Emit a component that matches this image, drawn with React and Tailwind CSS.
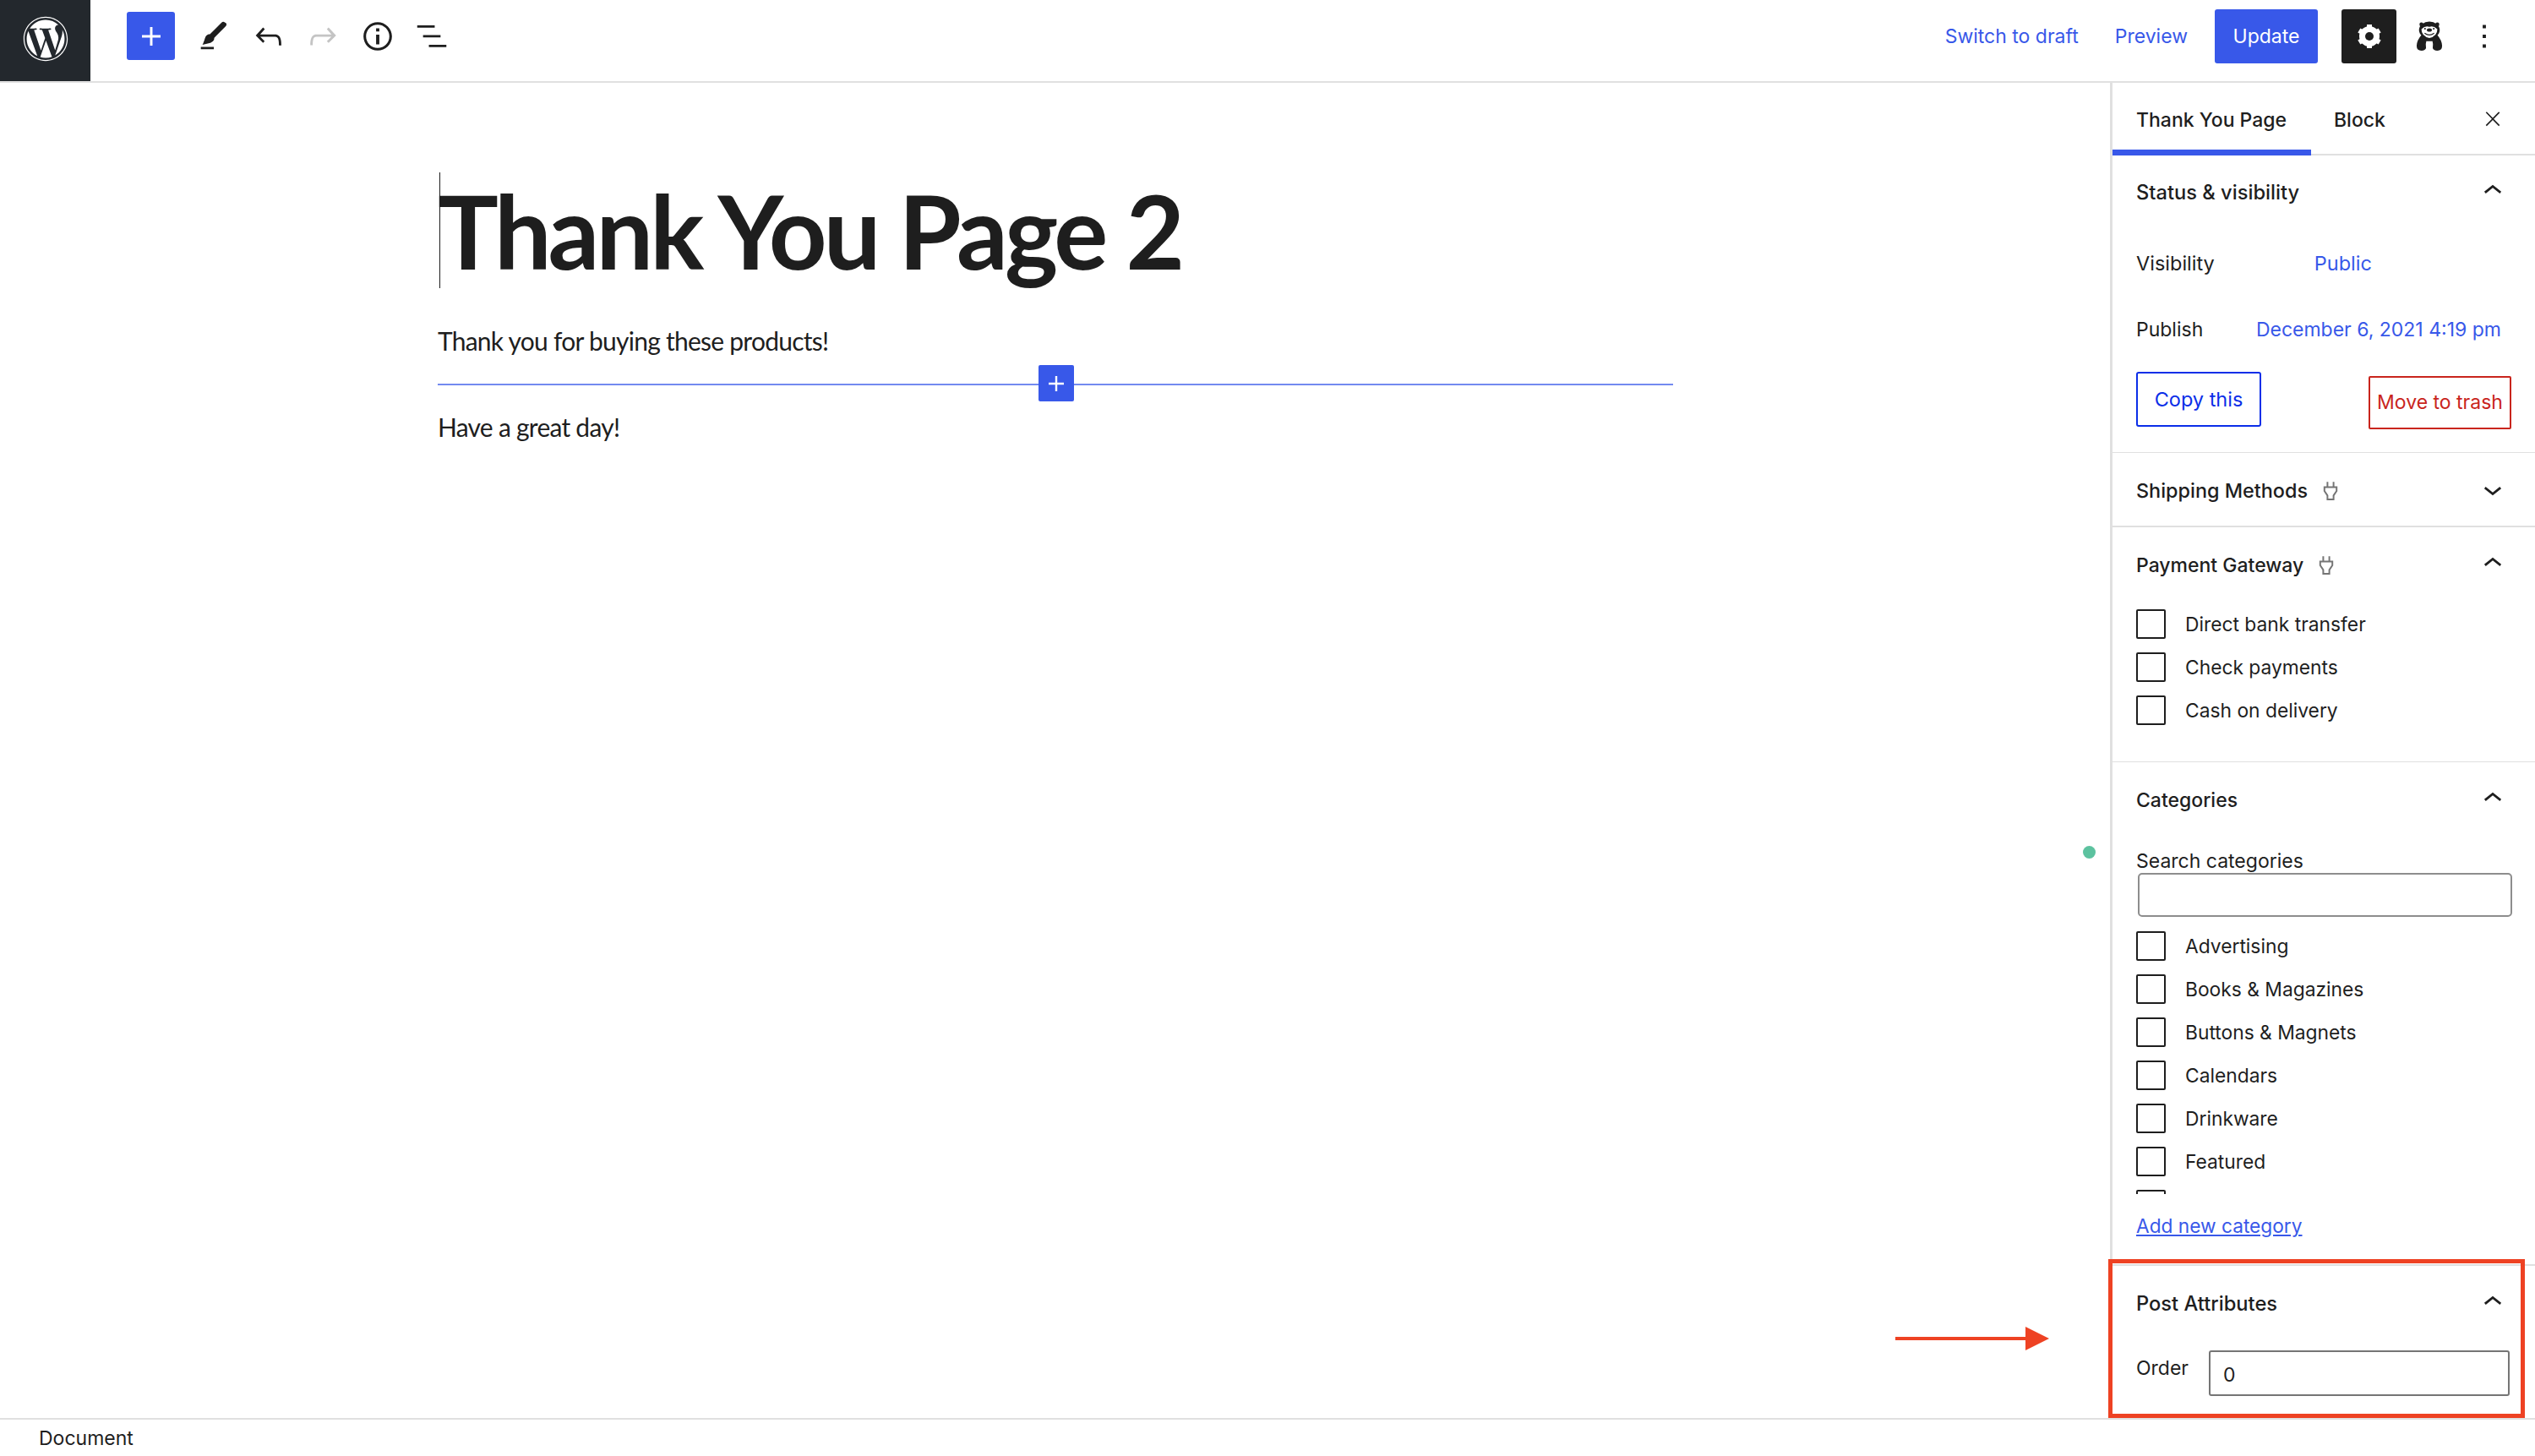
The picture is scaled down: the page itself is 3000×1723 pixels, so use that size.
import { FaWordpress } from 'react-icons/fa';

const ICONS = {
    plus: 'M18 11.2h-5.2V6h-1.6v5.2H6v1.6h5.2V18h1.6v-5.2H18z',
    pen: 'M4 20h8v-1.5H4V20zM18.9 3.5c-.6-.6-1.5-.6-2.1 0l-7.2 7.2c-.4-.1-.7 0-1.1.1-.5.2-1.5.7-1.9 2.2-.3 1-.6 1.9-.9 2.6-.2.6-.4 1-.5 1.2l-.2.4 4.9-1.2c.6-.2 1.5-.7 2.1-1.6.3-.5.3-1 .2-1.4l7.2-7.3c.6-.6.6-1.5 0-2.1z',
    undo: 'M18.3 11.7c-.6-.6-1.4-.9-2.3-.9H6.7l2.9-3.3-1.1-1-4.5 5L8.5 16l1-1-2.7-2.7H16c.5 0 .9.2 1.3.5 1 1 1 3.4 1 4.5v.3h1.5v-.2c0-1.5 0-4.3-1.5-5.7z',
    redo: 'M15.6 6.5l-1.1 1 2.9 3.3H8c-.9 0-1.7.3-2.3.9-1.4 1.5-1.4 4.2-1.4 5.6v.2h1.5v-.3c0-1.1 0-3.5 1-4.5.3-.3.7-.5 1.3-.5h9.2L14.5 15l1.1 1.1 4.6-4.6-4.6-5z',
    info: 'M12 3.2c-4.8 0-8.8 3.9-8.8 8.8 0 4.8 3.9 8.8 8.8 8.8 4.8 0 8.8-3.9 8.8-8.8 0-4.8-4-8.8-8.8-8.8zm0 16c-4 0-7.2-3.3-7.2-7.2C4.8 8 8 4.8 12 4.8s7.2 3.3 7.2 7.2c0 4-3.2 7.2-7.2 7.2zM11 17h2v-6h-2v6zm0-8h2V7h-2v2z',
    list: 'M13.8 5.2H3v1.5h10.8V5.2zm-3.6 12v1.5H21v-1.5H10.2zm7.2-6H6.6v1.5h10.8v-1.5z',
    more: 'M13 19h-2v-2h2v2zm0-6h-2v-2h2v2zm0-6h-2V5h2v2z',
    close: 'M13 11.8l6.1-6.3-1-1-6.1 6.2-6.1-6.3-1 1 6.2 6.4-6.2 6.3 1 1 6.1-6.3 6.1 6.3 1-1z',
    up: 'M6.5 12.4L12 8l5.5 4.4-.9 1.2L12 10l-4.5 3.6-1-1.2z',
    down: 'M17.5 11.6L12 16l-5.5-4.4.9-1.2L12 14l4.5-3.6 1 1.2z',
};

const Icon = ({ name, className }) => (
    <svg viewBox="0 0 24 24" fill="currentColor" className={className}>
        <path d={ICONS[name]} />
    </svg>
);

const Gear = () => (
    <svg viewBox="0 0 24 24" className="w-[40px] h-[40px] text-white">
        <g stroke="currentColor" strokeWidth="3.6">
            <line x1="12" y1="3.6" x2="12" y2="20.4" />
            <line x1="4.7" y1="7.8" x2="19.3" y2="16.2" />
            <line x1="4.7" y1="16.2" x2="19.3" y2="7.8" />
        </g>
        <circle cx="12" cy="12" r="5.2" fill="none" stroke="currentColor" strokeWidth="4" />
        <circle cx="12" cy="12" r="3" fill="#1e1e1e" />
    </svg>
);

const Bear = () => (
    <svg viewBox="0 0 34 38" className="w-[32px] h-[38px]">
        {/* cuerpo y brazos */}
        <path d="M8 16 Q1 24 1 31 Q1 37 7 37 Q12 37 13 33 L13 25 L21 25 L21 33 Q22 37 27 37 Q33 37 33 31 Q33 24 26 16z" fill="#1e1e1e" />
        <path d="M12.5 29 Q12.5 26 15 26 Q16.5 26 17 27.5 Q17.5 26 19 26 Q21.5 26 21.5 29 L21 37 L13 37z" fill="#fff" />
        {/* cabeza */}
        <ellipse cx="17" cy="11" rx="13" ry="10.5" fill="#1e1e1e" />
        <circle cx="7" cy="4" r="2.5" fill="#1e1e1e" />
        <circle cx="27" cy="4" r="2.5" fill="#1e1e1e" />
        <path d="M7 10 Q12 5 17 7 Q22 5 27 10 Q27 19 17 21 Q7 19 7 10z" fill="#fff" />
        <ellipse cx="17" cy="11" rx="3.2" ry="2.2" fill="#1e1e1e" />
        <circle cx="11.5" cy="9.5" r="1.1" fill="#1e1e1e" />
        <circle cx="22.5" cy="9.5" r="1.1" fill="#1e1e1e" />
        <path d="M11 15 Q17 19.5 23 15" fill="none" stroke="#1e1e1e" strokeWidth="1.2" />
    </svg>
);

const Plug = () => (
    <svg viewBox="0 0 20 26" fill="none" stroke="#757575" strokeWidth="2.2" className="w-[18px] h-[24px] ml-[18px]">
        <path d="M6 1v7M14 1v7M2 8h16v5l-4 6v5H6v-5l-4-6z" />
    </svg>
);

const Checkbox = ({ label, className = '' }) => (
    <div className={`flex items-center h-[35px] text-[#1e1e1e] ${className}`}>
        <span className="w-[35px] h-[35px] shrink-0 rounded-[2px] border-2 border-[#1e1e1e] bg-white" />
        <span className="ml-[23px] pt-[2px] text-[22.8px] leading-none">{label}</span>
    </div>
);

const PanelHead = ({ title, open = true, plug = false, className = '' }) => (
    <div className={`flex items-center justify-between h-[88px] pt-[2px] pl-[28px] pr-[28px] ${className}`}>
        <div className="flex items-center font-medium text-[#1e1e1e] leading-none">
            {title}
            {plug && <Plug />}
        </div>
        <Icon name={open ? 'up' : 'down'} className="w-[44px] h-[44px] -mt-[4px] text-[#1e1e1e]" />
    </div>
);

const categories = ['Advertising', 'Books & Magazines', 'Buttons & Magnets', 'Calendars', 'Drinkware', 'Featured'];

export default function App() {
    return (
        <div className="relative w-[3000px] h-[1723px] bg-white overflow-hidden flex flex-col font-['Inter',sans-serif]">
            {/* Barra superior */}
            <header className="h-[98px] shrink-0 flex items-start border-b-2 border-[#e0e0e0]">
                <div className="w-[107px] h-[96px] bg-[#23282d] flex items-center justify-center">
                    <FaWordpress className="w-[54px] h-[54px] text-white -mt-[4px]" />
                </div>
                <div className="ml-[43px] mt-[14px] w-[57px] h-[57px] rounded-[3px] bg-[#3858e9] flex items-center justify-center">
                    <Icon name="plus" className="w-[44px] h-[44px] text-white" />
                </div>
                <div className="ml-[23px] mt-[20px] flex items-center gap-[18.5px] text-[#1e1e1e]">
                    <Icon name="pen" className="w-[46px] h-[46px]" />
                    <Icon name="undo" className="w-[46px] h-[46px]" />
                    <Icon name="redo" className="w-[46px] h-[46px] text-[#c4c4c4]" />
                    <Icon name="info" className="w-[46px] h-[46px]" />
                    <Icon name="list" className="w-[46px] h-[46px]" />
                </div>
                <div className="ml-auto flex items-center h-[86px] pr-[37px] text-[23px]">
                    <span className="text-[#3858e9]">Switch to draft</span>
                    <span className="ml-[43px] text-[#3858e9]">Preview</span>
                    <div className="ml-[32px] w-[122px] h-[64px] rounded-[3px] bg-[#3858e9] text-white flex items-center justify-center">Update</div>
                    <div className="ml-[28px] w-[65px] h-[64px] rounded-[3px] bg-[#1e1e1e] flex items-center justify-center">
                        <Gear />
                    </div>
                    <div className="ml-[23px]"><Bear /></div>
                    <Icon name="more" className="ml-[26px] w-[46px] h-[46px] text-[#1e1e1e]" />
                </div>
            </header>

            <div className="flex flex-1 min-h-0">
                {/* Editor */}
                <main className="flex-1 pl-[518px]">
                    <div className="relative mt-[106px] h-[137px] flex items-center">
                        <div className="absolute left-[2px] top-0 w-px h-[137px] bg-[#1e1e1e]" />
                        <h1 className="font-['Lato',sans-serif] font-bold text-[120px] leading-none tracking-[-4px] text-[#1e1e1e] whitespace-nowrap">Thank You Page 2</h1>
                    </div>
                    <p className="mt-[42px] font-['Lato',sans-serif] text-[30px] leading-[40px] tracking-[-0.75px] text-[#1e1e1e]">Thank you for buying these products!</p>
                    <div className="relative mt-[31px] w-[1462px] h-[2px] bg-[#3858e9]/70">
                        <div className="absolute left-[711px] -top-[22px] w-[42px] h-[43px] rounded-[2px] bg-[#3858e9] flex items-center justify-center">
                            <Icon name="plus" className="w-[36px] h-[36px] text-white" />
                        </div>
                    </div>
                    <p className="mt-[29px] font-['Lato',sans-serif] text-[30px] leading-[40px] tracking-[-0.75px] text-[#1e1e1e]">Have a great day!</p>
                </main>

                {/* Panel lateral */}
                <aside className="w-[503px] shrink-0 border-l-[3px] border-[#e0e0e0] flex flex-col">
                    <div className="h-[86px] shrink-0 flex items-start border-b-2 border-[#e0e0e0] text-[23px] font-medium leading-[28px] text-[#1e1e1e]">
                        <div className="w-[235px] h-[86px] border-b-[7px] border-[#3858e9] pl-[28px] pt-[30px]">Thank You Page</div>
                        <div className="ml-[27px] pt-[30px]">Block</div>
                        <Icon name="close" className="ml-auto mr-[36px] mt-[29px] w-[28px] h-[28px]" />
                    </div>

                    {/* Status & visibility */}
                    <section className="h-[352px] shrink-0 border-b border-[#e0e0e0]">
                        <PanelHead title="Status & visibility" className="text-[23.7px] -mt-[1px]" />
                        <div className="flex items-center h-[40px] mt-[21px] pl-[28px] text-[23.5px] text-[#1e1e1e]">
                            Visibility
                            <span className="ml-[118px] text-[#3858e9]">Public</span>
                        </div>
                        <div className="flex items-center justify-between h-[40px] mt-[38px] pl-[28px] pr-[40px] text-[23px] text-[#1e1e1e]">
                            Publish
                            <span className="text-[#3858e9]">December 6, 2021 4:19 pm</span>
                        </div>
                        <div className="flex items-start justify-between mt-[30px] pl-[28px] pr-[28px] text-[23px]">
                            <div className="w-[148px] h-[65px] rounded-[3px] border-2 border-[#0b2ee8] text-[#0b2ee8] text-[23.5px] flex items-center justify-center">Copy this</div>
                            <div className="mt-[5px] w-[169px] h-[63px] rounded-[2px] border-2 border-[#c9251d] text-[#c9251d] flex items-center justify-center">Move to trash</div>
                        </div>
                    </section>

                    {/* Shipping Methods */}
                    <section className="h-[88px] shrink-0 border-b-2 border-[#e0e0e0]">
                        <PanelHead title="Shipping Methods" open={false} plug className="text-[23.4px]" />
                    </section>

                    {/* Payment Gateway */}
                    <section className="h-[278px] shrink-0 border-b border-[#e0e0e0]">
                        <PanelHead title="Payment Gateway" plug className="text-[23px]" />
                        <div className="pl-[28px] mt-[9px] flex flex-col gap-[16px]">
                            <Checkbox label="Direct bank transfer" />
                            <Checkbox label="Check payments" />
                            <Checkbox label="Cash on delivery" />
                        </div>
                    </section>

                    {/* Categories */}
                    <section className="h-[596px] shrink-0 border-b-2 border-[#e0e0e0]">
                        <PanelHead title="Categories" className="text-[23px]" />
                        <div className="pl-[28px] pr-[27px]">
                            <div className="mt-[15px] h-[28px] text-[23px] leading-[28px] text-[#1e1e1e]">Search categories</div>
                            <div className="ml-[2px] h-[52px] rounded-[5px] border-2 border-[#8d8d8d]" />
                            <div className="mt-[17px] h-[311px] overflow-hidden flex flex-col gap-[16px]">
                                {categories.map(c => <Checkbox key={c} label={c} />)}
                                <Checkbox label="Games" className="[&>span:last-child]:invisible" />
                            </div>
                            <a className="block mt-[24px] text-[22.7px] leading-[28px] text-[#3858e9] underline">Add new category</a>
                        </div>
                    </section>

                    {/* Post Attributes */}
                    <section className="flex-1">
                        <PanelHead title="Post Attributes" className="text-[23.7px]" />
                        <div className="flex items-start pl-[28px] mt-[12px]">
                            <span className="text-[23px] leading-[28px] mt-[7px] text-[#1e1e1e]">Order</span>
                            <div className="ml-[24px] w-[356px] h-[54px] rounded-[3px] border-2 border-[#757575] pl-[15px] flex items-center pt-[4px] text-[23px] text-[#1e1e1e]">0</div>
                        </div>
                    </section>
                </aside>
            </div>

            {/* Pie de página */}
            <footer className="h-[45px] shrink-0 border-t-2 border-[#e0e0e0] pl-[46px] pt-[2px] flex items-center text-[23px] text-[#1e1e1e]">Document</footer>

            {/* Anotaciones sobre la captura */}
            <div className="absolute left-[2465px] top-[1001px] w-[15px] h-[15px] rounded-full bg-[#5cc29f]" />
            <div className="absolute left-[2495px] top-[1490px] w-[493px] h-[188px] border-[5px] border-[#ee4223]" />
            <svg viewBox="0 0 182 28" className="absolute left-[2243px] top-[1570px] w-[182px] h-[28px]">
                <path d="M0 12h154V0l28 14-28 14V16H0z" fill="#ee4223" />
            </svg>
        </div>
    );
}
